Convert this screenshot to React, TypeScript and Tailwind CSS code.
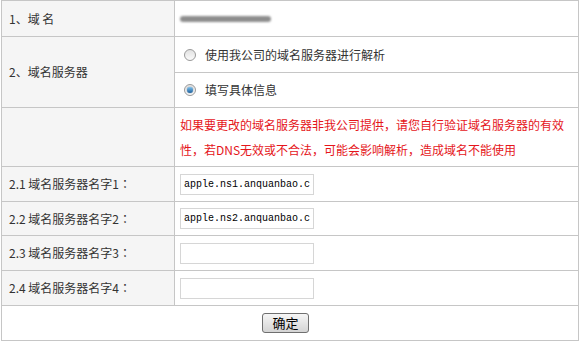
import React from "react"

const cjk = { fontFamily: '"Microsoft YaHei", "Noto Sans CJK SC", "Noto Sans", sans-serif' }
const centered = { fontFamily: '"Noto Sans CJK TC", sans-serif' }

function Radio({ checked }: { checked?: boolean }) {
  return (
    <span className="relative inline-flex h-[12px] w-[12px] items-center justify-center rounded-full border border-[#9a9a9a] bg-gradient-to-b from-[#e2e2e2] to-[#fafafa]">
      {checked && (
        <span className="h-[6px] w-[6px] rounded-full bg-gradient-to-b from-[#7fc4f0] to-[#1a5e9a] shadow-[0_0_1px_#0b3a66]" />
      )}
    </span>
  )
}

const servers = [
  { label: "2.1 域名服务器名字1", value: "apple.ns1.anquanbao.c" },
  { label: "2.2 域名服务器名字2", value: "apple.ns2.anquanbao.c" },
  { label: "2.3 域名服务器名字3", value: "" },
  { label: "2.4 域名服务器名字4", value: "" },
]

export default function App() {
  const cell = "border border-[#c6c6c6] align-middle"
  const label = `${cell} bg-[#f5f5f5] pl-[7px] text-[#333]`

  return (
    <div className="h-[344px] w-[581px] bg-white pl-px text-[12px] text-[#333]" style={cjk}>
      <table className="w-[578px] table-fixed border-collapse">
        <colgroup>
          <col className="w-[173px]" />
          <col />
        </colgroup>
        <tbody>
          <tr className="h-[36px]">
            <td className={label}>1、域 名</td>
            <td className={`${cell} pl-[5px]`}>
              <div className="h-[6px] w-[91px] rounded-full bg-[#8d8d8d] blur-[1px]" />
            </td>
          </tr>
          <tr className="h-[36px]">
            <td className={label} rowSpan={2}>
              2、域名服务器
            </td>
            <td className={`${cell} pl-[9px]`}>
              <label className="flex items-center gap-[9px]">
                <Radio />
                <span>使用我公司的域名服务器进行解析</span>
              </label>
            </td>
          </tr>
          <tr className="h-[35px]">
            <td className={`${cell} pl-[9px]`}>
              <label className="flex items-center gap-[9px]">
                <Radio checked />
                <span>填写具体信息</span>
              </label>
            </td>
          </tr>
          <tr className="h-[59px]">
            <td className={`${cell} bg-[#f5f5f5]`} />
            <td className={`${cell} pl-[5px] pr-[8px] leading-[25px] text-[#e5161b]`}>
              如果要更改的域名服务器非我公司提供，请您自行验证域名服务器的有效性，若DNS无效或不合法，可能会影响解析，造成域名不能使用
            </td>
          </tr>
          {servers.map((s, i) => (
            <tr key={s.label} className={i === 1 ? "h-[34px]" : "h-[35px]"}>
              <td className={label}>
                {s.label}
                <span style={centered}>：</span>
              </td>
              <td className={`${cell} pl-[5px]`}>
                <input
                  type="text"
                  defaultValue={s.value}
                  className="block h-[21px] w-[134px] border border-[#d6d6d6] bg-white px-[3px] text-[10px] text-black outline-none"
                  style={{ fontFamily: '"Liberation Mono", "DejaVu Sans Mono", monospace' }}
                />
              </td>
            </tr>
          ))}
          <tr className="h-[35px]">
            <td className={`${cell} text-center`} colSpan={2}>
              <button className="ml-[-9px] h-[20px] w-[47px] rounded-[3px] border border-[#6f6f6f] bg-gradient-to-b from-[#f6f6f6] to-[#d4d4d4] text-[13px] leading-[18px] text-black">
                确定
              </button>
            </td>
          </tr>
        </tbody>
      </table>
    </div>
  )
}
